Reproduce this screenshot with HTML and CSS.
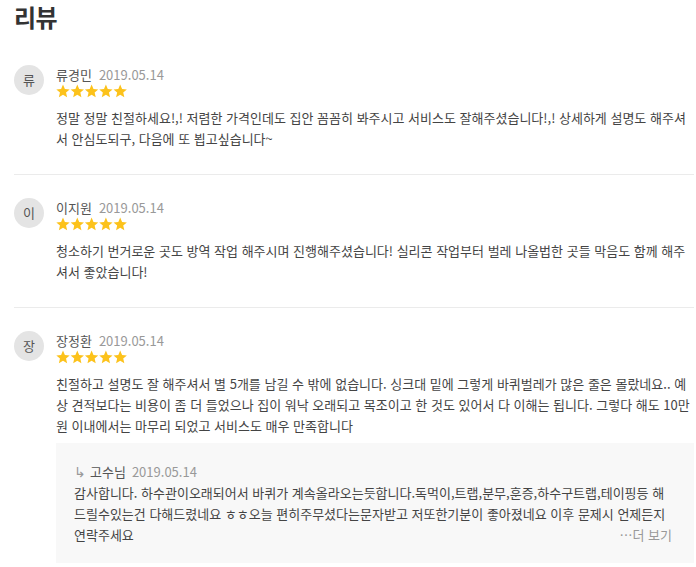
FILE: index.html
```html
<!DOCTYPE html>
<html lang="ko">
<head>
<meta charset="utf-8">
<title>리뷰</title>
<link rel="stylesheet" href="styles.css">
</head>
<body>
<svg class="defs" width="0" height="0" aria-hidden="true">
  <defs>
    <polygon id="star" points="7,0.6 8.88,5.01 13.66,5.44 10.04,8.59 11.11,13.26 7,10.8 2.89,13.26 3.96,8.59 0.34,5.44 5.12,5.01"/>
    <g id="stars5" fill="#fcc21b">
      <use href="#star" x="0"/>
      <use href="#star" x="14.3"/>
      <use href="#star" x="28.6"/>
      <use href="#star" x="42.9"/>
      <use href="#star" x="57.2"/>
    </g>
  </defs>
</svg>
<main class="page">
  <h2 class="title">리뷰</h2>

  <section class="review">
    <div class="avatar">류</div>
    <div class="content">
      <div class="meta"><span class="name">류경민</span><span class="date">2019.05.14</span></div>
      <svg class="stars" width="72" height="14" viewBox="0 0 72 14"><use href="#stars5"/></svg>
      <p class="text">정말 정말 친절하세요!,! 저렴한 가격인데도 집안 꼼꼼히 봐주시고 서비스도 잘해주셨습니다!,! 상세하게 설명도 해주셔서 안심도되구, 다음에 또 뵙고싶습니다~</p>
    </div>
  </section>

  <section class="review">
    <div class="avatar">이</div>
    <div class="content">
      <div class="meta"><span class="name">이지원</span><span class="date">2019.05.14</span></div>
      <svg class="stars" width="72" height="14" viewBox="0 0 72 14"><use href="#stars5"/></svg>
      <p class="text">청소하기 번거로운 곳도 방역 작업 해주시며 진행해주셨습니다! 실리콘 작업부터 벌레 나올법한 곳들 막음도 함께 해주셔서 좋았습니다!</p>
    </div>
  </section>

  <section class="review last">
    <div class="avatar">장</div>
    <div class="content">
      <div class="meta"><span class="name">장정환</span><span class="date">2019.05.14</span></div>
      <svg class="stars" width="72" height="14" viewBox="0 0 72 14"><use href="#stars5"/></svg>
      <p class="text">친절하고 설명도 잘 해주셔서 별 5개를 남길 수 밖에 없습니다. 싱크대 밑에 그렇게 바퀴벌레가 많은 줄은 몰랐네요.. 예상 견적보다는 비용이 좀 더 들었으나 집이 워낙 오래되고 목조이고 한 것도 있어서 다 이해는 됩니다. 그렇다 해도 10만원 이내에서는 마무리 되었고 서비스도 매우 만족합니다</p>
      <div class="reply">
        <div class="reply-meta"><span class="arrow">↳</span><span class="name">고수님</span><span class="date">2019.05.14</span></div>
        <p class="reply-text">감사합니다. 하수관이오래되어서 바퀴가 계속올라오는듯합니다.독먹이,트랩,분무,훈증,하수구트랩,테이핑등 해드릴수있는건 다해드렸네요 ㅎㅎ오늘 편히주무셨다는문자받고 저또한기분이 좋아졌네요 이후 문제시 언제든지 연락주세요<span class="more">…더 보기</span></p>
      </div>
    </div>
  </section>
</main>
</body>
</html>
```

FILE: styles.css
```css
html, body {
  margin: 0;
  padding: 0;
  background: #fff;
}

body {
  font-family: "Noto Sans CJK KR", "Noto Sans", sans-serif;
  color: #444;
  font-size: 13px;
}

.defs {
  position: absolute;
  width: 0;
  height: 0;
}

.page {
  width: 680px;
  padding: 0 2px 0 14px;
}

.title {
  margin: 0 0 8px;
  font-size: 24px;
  line-height: 34px;
  font-weight: 700;
  color: #333;
  letter-spacing: -0.5px;
}

.review {
  display: flex;
  align-items: flex-start;
  padding: 24px 0 25px;
  border-bottom: 1px solid #ebebeb;
}

.review.last {
  border-bottom: none;
  padding-bottom: 0;
}

.avatar {
  flex: none;
  width: 30px;
  height: 30px;
  margin-top: -1px;
  margin-right: 12px;
  border-radius: 50%;
  background: #e4e4e4;
  color: #555;
  font-size: 13px;
  line-height: 30px;
  text-align: center;
}

.content {
  flex: 1;
  min-width: 0;
}

.meta {
  display: flex;
  align-items: baseline;
  gap: 7px;
  line-height: 18px;
  height: 18px;
}

.name {
  color: #555;
  font-size: 13px;
}

.date {
  color: #999;
  font-size: 13px;
}

.stars {
  display: block;
  margin-top: 0;
}

.text {
  margin: 9px 0 0;
  padding-right: 3px;
  line-height: 21px;
  color: #444;
}

.reply {
  margin-top: 7px;
  padding: 19px 22px 18px 18px;
  background: #f8f8f8;
}

.reply-meta {
  display: flex;
  align-items: baseline;
  gap: 6px;
  line-height: 20px;
}

.arrow {
  display: inline-block;
  width: 10px;
  color: #999;
  font-family: "DejaVu Sans", sans-serif;
  font-size: 14px;
}

.reply-text {
  margin: 0;
  line-height: 21px;
  color: #444;
}

.more {
  float: right;
  color: #999;
}
```
